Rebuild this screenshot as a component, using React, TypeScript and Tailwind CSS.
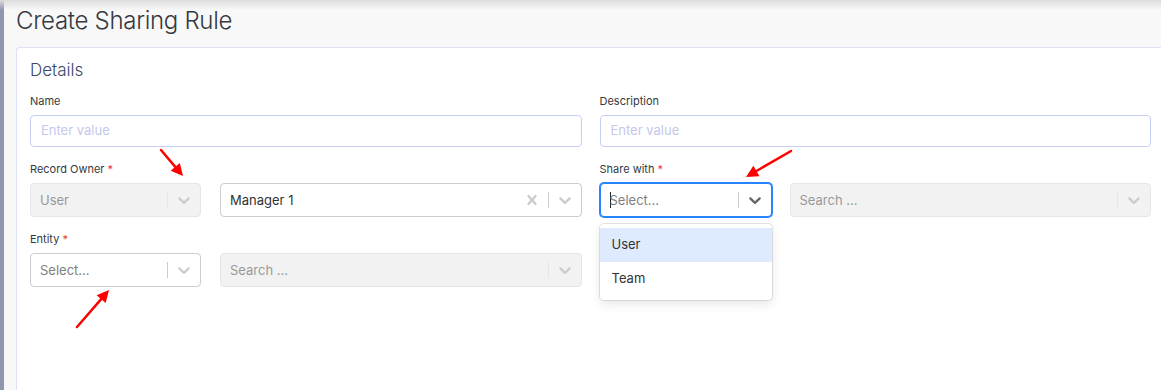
import React from "react";

const Chevron = ({ color }: { color: string }) => (
  <svg width="20" height="20" viewBox="0 0 20 20" fill={color} aria-hidden="true">
    <path d="M4.516 7.548c0.436-0.446 1.043-0.481 1.576 0l3.908 3.747 3.908-3.747c0.533-0.481 1.141-0.446 1.574 0 0.436 0.445 0.408 1.197 0 1.615-0.406 0.418-4.695 4.502-4.695 4.502-0.217 0.223-0.502 0.335-0.787 0.335s-0.57-0.112-0.789-0.335c0 0-4.287-4.084-4.695-4.502s-0.436-1.17 0-1.615z" />
  </svg>
);

const Cross = ({ color }: { color: string }) => (
  <svg width="20" height="20" viewBox="0 0 20 20" fill={color} aria-hidden="true">
    <path d="M14.348 14.849c-0.469 0.469-1.229 0.469-1.697 0l-2.651-3.030-2.651 3.029c-0.469 0.469-1.229 0.469-1.697 0-0.469-0.469-0.469-1.229 0-1.697l2.758-3.15-2.759-3.152c-0.469-0.469-0.469-1.228 0-1.697s1.228-0.469 1.697 0l2.652 3.031 2.651-3.031c0.469-0.469 1.228-0.469 1.697 0s0.469 1.229 0 1.697l-2.758 3.152 2.758 3.15c0.469 0.469 0.469 1.229 0 1.698z" />
  </svg>
);

type SelectProps = {
  value?: string;
  placeholder?: string;
  disabled?: boolean;
  focused?: boolean;
  clearable?: boolean;
  className?: string;
  menu?: boolean;
};

const Select = ({ value, placeholder, disabled, focused, clearable, className, menu }: SelectProps) => {
  const base = disabled
    ? "bg-[#f2f2f2] border-[#e6e6e6]"
    : focused
    ? "bg-white border-[#2684ff] shadow-[0_0_0_1px_#2684ff]"
    : "bg-white border-[#cccccc]";
  const iconColor = focused ? "#666666" : "#cccccc";
  return (
    <div className={`relative ${className ?? ""}`}>
      <div className={`h-[34px] flex items-center border rounded-[4px] ${base}`}>
        <div className="flex-1 min-w-0 pl-[9px] flex items-center text-[13px] leading-[16px]">
          {focused && <span className="w-px h-[16px] bg-[#222] mr-[-1px]" />}
          {value ? (
            <span className={disabled ? "text-[#999999]" : "text-[#333333]"}>{value}</span>
          ) : (
            <span className={disabled ? "text-[#999999]" : "text-[#808080]"}>{placeholder}</span>
          )}
        </div>
        {clearable && (
          <div className="w-[32px] flex items-center justify-center">
            <Cross color="#cccccc" />
          </div>
        )}
        <span className={`w-px self-stretch my-[8px] ${disabled ? "bg-[#e6e6e6]" : "bg-[#cccccc]"}`} />
        <div className="w-[32px] flex items-center justify-center">
          <Chevron color={iconColor} />
        </div>
      </div>
      {menu && (
        <div className="absolute left-0 right-0 top-full mt-[7px] bg-white rounded-[4px] py-[4px] shadow-[0_0_0_1px_rgba(0,0,0,0.1),0_4px_11px_rgba(0,0,0,0.1)] z-10">
          <div className="h-[34px] px-[12px] flex items-center text-[13px] text-[#333333] bg-[#deebff]">User</div>
          <div className="h-[34px] px-[12px] flex items-center text-[13px] text-[#333333]">Team</div>
        </div>
      )}
    </div>
  );
};

const Label = ({ children, required }: { children: React.ReactNode; required?: boolean }) => (
  <div className="text-[11px] leading-[14px] text-[#343a40] mb-[7px] h-[14px]">
    {children}
    {required && <span className="text-[#e53935] ml-[3px]">*</span>}
  </div>
);

const TextInput = () => (
  <div className="h-[32px] border border-[#c8cef2] rounded-[4px] flex items-center pl-[10px] text-[13px] text-[#c4c8ea] bg-white">
    Enter value
  </div>
);

const arrow = (x1: number, y1: number, x2: number, y2: number) => {
  const dx = x2 - x1;
  const dy = y2 - y1;
  const len = Math.hypot(dx, dy);
  const ux = dx / len;
  const uy = dy / len;
  const hl = 12;
  const hw = 6;
  const bx = x2 - ux * hl;
  const by = y2 - uy * hl;
  const px = -uy;
  const py = ux;
  return {
    line: { x1, y1, x2: bx + ux * 2, y2: by + uy * 2 },
    head: `${x2},${y2} ${bx + px * hw},${by + py * hw} ${bx - px * hw},${by - py * hw}`,
  };
};

const arrows = [arrow(161, 150, 183, 176), arrow(791, 151, 746, 177), arrow(77, 327, 109, 290)];

export default function App() {
  return (
    <div className="relative w-[1161px] h-[390px] overflow-hidden bg-[#f8f8f8] flex font-['Inter','Noto_Sans',sans-serif]">
      <div className="w-[4px] shrink-0 bg-[#8f97ae]" />
      <div className="flex-1 min-w-0 pl-[12px] pt-[5px] flex flex-col">
        <h1 className="text-[24px] leading-[32px] font-light text-[#343a40] mb-[10px] tracking-[-0.3px]">
          Create Sharing Rule
        </h1>
        <div className="flex-1 bg-white border-l border-t border-[#dde1f4] rounded-tl-[4px] pl-[13px] pr-[10px] pt-[10px]">
          <h2 className="text-[17px] leading-[24px] font-light text-[#3b4866] mb-[12px]">Details</h2>
          <div className="grid grid-cols-2 gap-x-[18px] gap-y-[15px]">
            <div>
              <Label>Name</Label>
              <TextInput />
            </div>
            <div>
              <Label>Description</Label>
              <TextInput />
            </div>
            <div>
              <Label required>Record Owner</Label>
              <div className="flex gap-[19px]">
                <Select className="w-[171px]" value="User" disabled />
                <Select className="flex-1" value="Manager 1" clearable />
              </div>
            </div>
            <div>
              <Label required>Share with</Label>
              <div className="flex gap-[18px]">
                <Select className="w-[172px]" placeholder="Select..." focused menu />
                <Select className="flex-1" placeholder="Search ..." disabled />
              </div>
            </div>
            <div>
              <Label required>Entity</Label>
              <div className="flex gap-[19px]">
                <Select className="w-[171px]" placeholder="Select..." />
                <Select className="flex-1" placeholder="Search ..." disabled />
              </div>
            </div>
          </div>
        </div>
      </div>
      <div className="absolute top-0 left-0 right-0 h-[10px] bg-gradient-to-b from-[#dcdcdc] to-transparent pointer-events-none" />
      <svg className="absolute inset-0 pointer-events-none z-20" width="1161" height="390">
        {arrows.map((a, i) => (
          <g key={i}>
            <line {...a.line} stroke="#ff0000" strokeWidth="2.5" strokeLinecap="round" />
            <polygon points={a.head} fill="#ff0000" />
          </g>
        ))}
      </svg>
    </div>
  );
}
